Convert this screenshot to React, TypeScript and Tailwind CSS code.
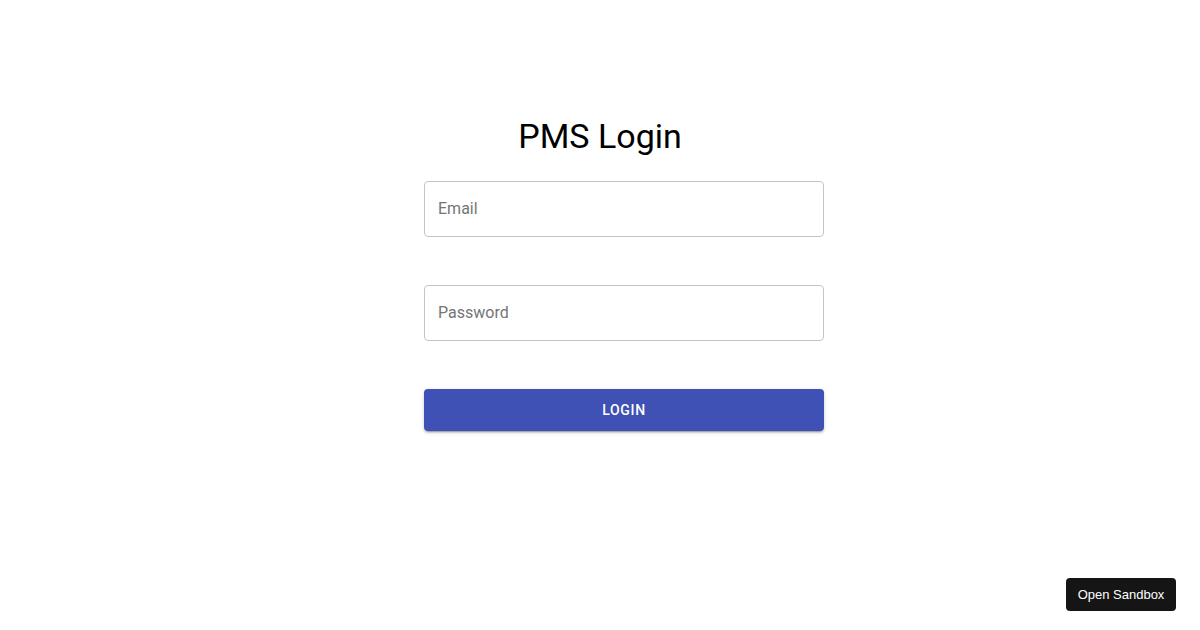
import React from "react";

export default function App() {
  return (
    <div
      className="relative w-[1200px] h-[630px] bg-white overflow-hidden"
      style={{ fontFamily: "Roboto, 'Noto Sans', Arial, sans-serif" }}
    >
      <div className="flex flex-col items-center pt-[115px]">
        <h1 className="text-[34px] leading-[42px] font-normal text-black">
          PMS Login
        </h1>
        <form className="w-[400px] ml-[48px] mt-[24px] flex flex-col" onSubmit={(e) => e.preventDefault()}>
          <div className="h-[56px] rounded-[4px] border border-[#c4c4c4] flex items-center px-[13px]">
            <input
              placeholder="Email"
              className="w-full outline-none text-[16px] text-black placeholder:text-[#757575] bg-transparent"
            />
          </div>
          <div className="h-[56px] mt-[48px] rounded-[4px] border border-[#c4c4c4] flex items-center px-[13px]">
            <input
              type="password"
              placeholder="Password"
              className="w-full outline-none text-[16px] text-black placeholder:text-[#757575] bg-transparent"
            />
          </div>
          <button
            type="submit"
            className="mt-[48px] h-[42px] rounded-[4px] bg-[#3f51b5] text-white text-[14px] font-medium uppercase tracking-[0.7px] shadow-[0px_3px_1px_-2px_rgba(0,0,0,0.2),0px_2px_2px_0px_rgba(0,0,0,0.14),0px_1px_5px_0px_rgba(0,0,0,0.12)]"
          >
            Login
          </button>
        </form>
      </div>
      <div
        className="absolute left-[1066px] top-[578px] w-[110px] h-[33px] rounded-[4px] bg-[#151515] text-white text-[13px] flex items-center justify-center"
        style={{ fontFamily: "'Liberation Sans', Arial, sans-serif" }}
      >
        Open Sandbox
      </div>
    </div>
  );
}
